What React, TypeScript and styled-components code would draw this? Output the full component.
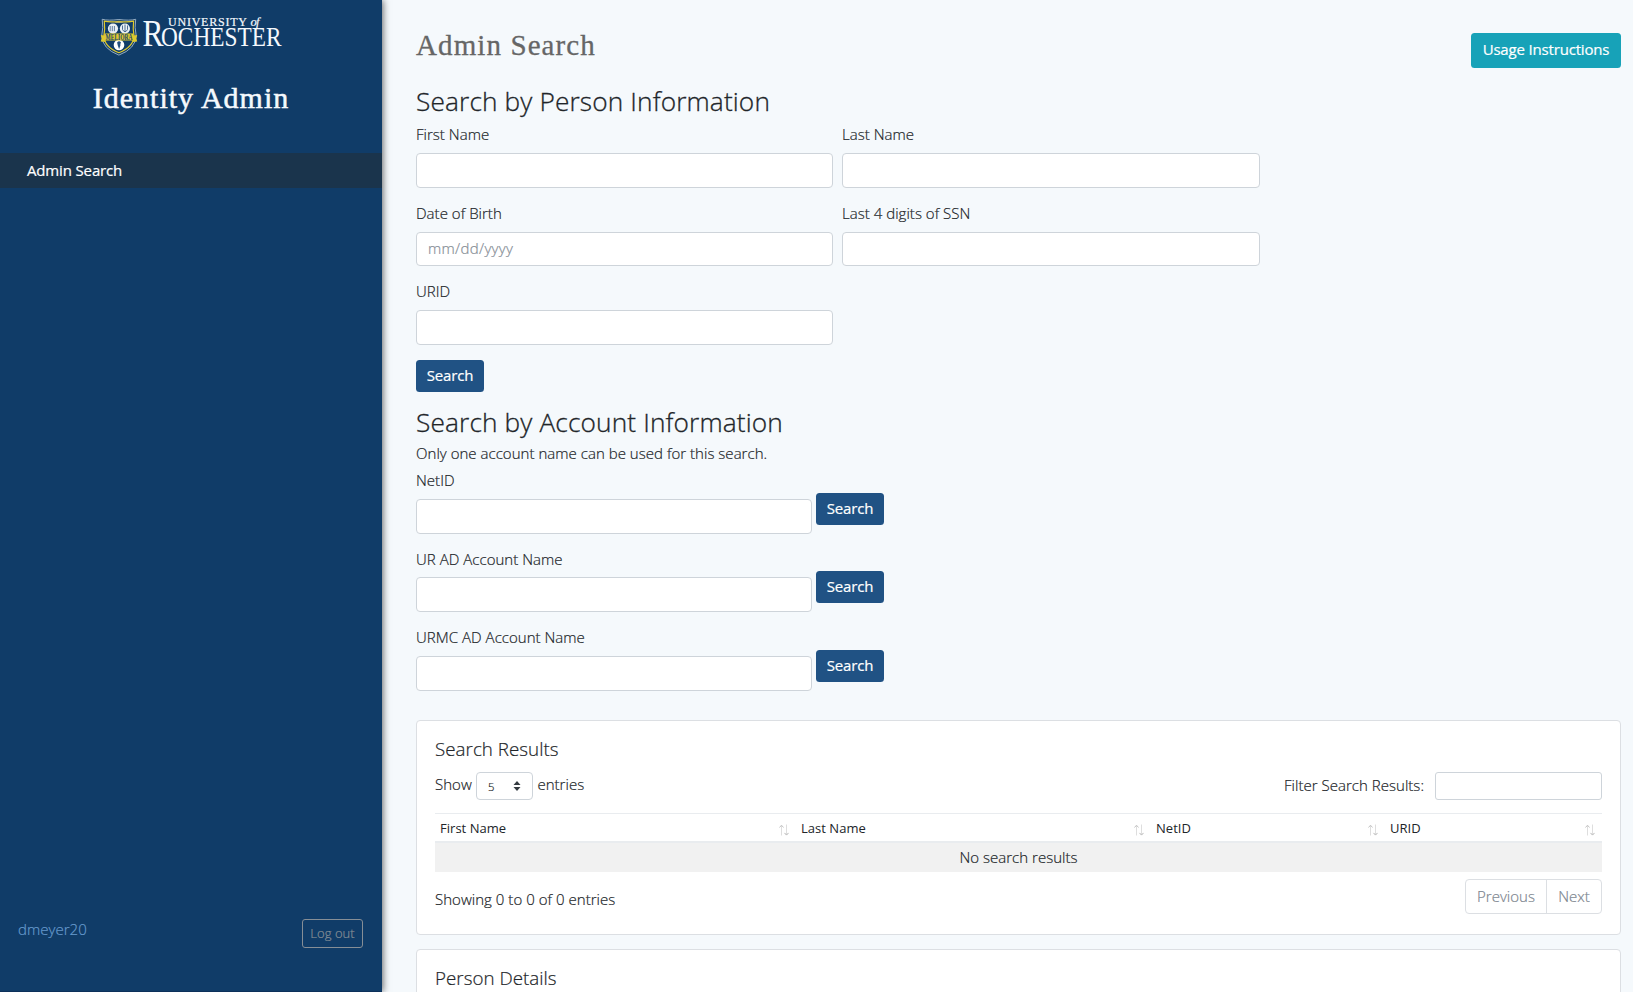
import React from 'react';
import styled, { createGlobalStyle } from 'styled-components';

const GlobalStyle = createGlobalStyle`
  *, *::before, *::after { box-sizing: border-box; }
  body {
    margin: 0;
    background: #f5f9fc;
    color: #212529;
    font: 300 15px/22.5px 'Open Sans', 'Noto Sans', sans-serif;
    letter-spacing: 0.03px;
    -webkit-text-stroke: 0.2px;
  }
  button, input { font: inherit; letter-spacing: inherit; }
`;

const Page = styled.div`
  display: flex;
  height: 992px;
  overflow: hidden;
`;

const Sidebar = styled.aside`
  display: flex;
  flex-direction: column;
  flex: none;
  width: 382px;
  background: #103c68;
  border-bottom: 1px solid #0c305a;
  box-shadow: 1px 0 7px rgba(0, 0, 0, 0.6);
`;

const Logo = styled.svg`
  display: block;
  width: 190px;
  height: 48px;
  margin: 14px 0 0 97px;
  overflow: visible;
  font-family: 'Liberation Serif', serif;
  letter-spacing: 0;
  -webkit-text-stroke: 0;
`;

const AppName = styled.h1`
  margin: 18px 0 37px;
  font: 400 30px/36px 'Liberation Serif', serif;
  letter-spacing: 1px;
  text-align: center;
  color: #f5f9fd;
  -webkit-text-stroke: 0.5px #f5f9fd;
`;

const NavItem = styled.a`
  padding-left: 27px;
  line-height: 35px;
  font-weight: 400;
  letter-spacing: -0.15px;
  color: #fff;
  background: #1a344c;
`;

const SidebarFooter = styled.div`
  display: flex;
  justify-content: space-between;
  align-items: flex-start;
  margin-top: auto;
  padding: 0 19px 43px 18px;
`;

const UserName = styled.span`
  color: #6699cc;
`;

const LogoutButton = styled.button`
  width: 61px;
  height: 29px;
  margin-top: 1px;
  padding: 0;
  border: 1px solid #868e96;
  border-radius: 3px;
  background: none;
  color: #868e96;
  font-size: 13px;
`;

const Main = styled.main`
  flex: 1;
  min-width: 0;
  padding: 0 12px 0 34px;
`;

const Header = styled.header`
  display: flex;
  justify-content: space-between;
  align-items: flex-start;
  height: 86px;
  padding-top: 26px;
`;

const PageTitle = styled.h2`
  margin: 0;
  font: 400 29px/38px 'Liberation Serif', serif;
  letter-spacing: 1.1px;
  color: #666;
  -webkit-text-stroke: 0.3px #666;
`;

const Button = styled.button<{ $info?: boolean }>`
  flex: none;
  width: ${(p) => (p.$info ? 150 : 68)}px;
  height: ${(p) => (p.$info ? 35 : 32.25)}px;
  margin-top: ${(p) => (p.$info ? 7 : 0)}px;
  padding: 0 0 ${(p) => (p.$info ? 2 : 1.4)}px;
  border: 0;
  border-radius: 3.5px;
  background: ${(p) => (p.$info ? '#17a2b8' : '#205284')};
  color: #fff;
  font-weight: 400;
  letter-spacing: -0.17px;
`;

const SectionTitle = styled.h3<{ $top?: number; $bottom: number }>`
  margin: ${(p) => p.$top ?? 0}px 0 ${(p) => p.$bottom}px;
  font-size: 26.25px;
  font-weight: 300;
  line-height: 31.5px;
  letter-spacing: 0.13px;
  -webkit-text-stroke: 0.3px;
`;

const PersonGrid = styled.div`
  display: grid;
  grid-template-columns: 417px 418px;
  grid-auto-rows: 78.5px;
  column-gap: 9px;
  margin-bottom: 1.4px;
`;

const Field = styled.label`
  display: block;
`;

const Input = styled.input`
  display: block;
  width: 100%;
  height: 34.5px;
  margin-top: 7.8px;
  padding: 0 11px 2px;
  border: 1px solid #ced4da;
  border-radius: 4px;
  background: #fff;
  &::placeholder { color: #868e96; letter-spacing: 0.3px; opacity: 1; }
`;

const Hint = styled.p`
  margin: 0 0 4.2px;
`;

const AccountRow = styled.div`
  display: grid;
  grid-template-columns: 396px auto;
  justify-content: start;
  align-items: start;
  column-gap: 4px;
  height: 78.5px;
  & ${Input} { height: 35px; margin-top: 7.4px; }
  & > ${Button} { margin-top: 23.7px; }
`;

const Card = styled.section<{ $top: number }>`
  margin-top: ${(p) => p.$top}px;
  padding: 16px 18px 20px;
  border: 1px solid #dcdfe3;
  border-radius: 4px;
  background: #fff;
`;

const CardTitle = styled.h4`
  margin: 0 0 12px;
  font-size: 18.75px;
  font-weight: 300;
  line-height: 23px;
`;

const Controls = styled.div`
  display: flex;
  justify-content: space-between;
  height: 28px;
  margin-bottom: 13px;
`;

const LengthControl = styled.div`
  display: flex;
  gap: 4.300px;
  line-height: 25px;
`;

const LengthSelect = styled.div`
  display: flex;
  justify-content: space-between;
  align-items: center;
  width: 57px;
  height: 28px;
  padding: 0 11px;
  border: 1px solid #ced4da;
  border-radius: 4px;
  font-size: 11.25px;
`;

const FilterControl = styled.label`
  display: flex;
  gap: 11px;
  line-height: 27px;
`;

const FilterInput = styled(Input)`
  width: 167px;
  height: 28px;
  margin: 0;
  border-radius: 3px;
`;

const Table = styled.div`
  border-top: 1px solid #e9ecef;
`;

const TableHead = styled.div`
  display: grid;
  grid-template-columns: 361px 355px 234px 217px;
  height: 29px;
  border-bottom: 2px solid #e9ecef;
`;

const HeadCell = styled.div`
  display: flex;
  justify-content: space-between;
  align-items: center;
  padding: 2px 7px 0 5px;
  font-size: 13px;
  font-weight: 400;
  -webkit-text-stroke: 0;
`;

const SortGlyph = styled.svg`
  width: 10px;
  height: 12px;
  margin-top: 2px;
`;

const EmptyRow = styled.div`
  background: #f1f1f1;
  text-align: center;
  line-height: 29px;
`;

const TableFooter = styled.div`
  display: flex;
  justify-content: space-between;
  height: 35px;
  margin-top: 7px;
  line-height: 41px;
`;

const Pagination = styled.div`
  display: flex;
  height: 35px;
  border: 1px solid #dcdfe3;
  border-radius: 4px;
`;

const PageLink = styled.a<{ $width: number }>`
  width: ${(p) => p.$width}px;
  line-height: 33px;
  text-align: center;
  color: #7d868f;
  & + & { border-left: 1px solid #dcdfe3; }
`;

const SortIcon = () => (
  <SortGlyph viewBox="0 0 10 12" fill="none">
    <path d="M2.5 11.5V1.5" stroke="#dedede" />
    <path d="M.5 3.5 2.5 1.2 4.5 3.5" stroke="#c4c4c4" />
    <path d="M7.5.5v10" stroke="#dedede" />
    <path d="M5.5 8.9l2 2.2 2-2.2" stroke="#b5b5b5" />
  </SortGlyph>
);

const RochesterLogo = () => (
  <Logo viewBox="97 14 190 48" role="img">
    <path d="M102.2 19.3q6 1.6 16.7.2 10.7 1.4 16.8-.2-1.4 8 .5 16.5-.7 13-17.3 19.3Q102.3 48.8 101.7 35.8q1.9-8.5.5-16.5z" fill="#103c68" stroke="#a3b8cb" strokeWidth=".9" />
    <path d="M104.3 21.2q6 1.4 14.6.2 8.6 1.2 14.7-.2-.9 7.5.4 14.5-.4 11.2-15.1 17-14.7-5.8-15-17 1.3-7 .4-14.500z" fill="none" stroke="#dfc92f" strokeWidth="1.2" />
    <path d="M115.2 22.3h7.5" stroke="#a9a766" strokeWidth="1.4" />
    <circle cx="113" cy="28.6" r="5.1" fill="#eaf0f5" />
    <path d="M110.2 26v5.2M112.3 26v5.2M114.4 26v5.2" stroke="#3c6189" strokeWidth=".8" />
    <circle cx="124.9" cy="28.6" r="5.1" fill="#eaf0f5" />
    <path d="M122.5 25.5v4q2.5 4.5 5 0v-4M125 24.5v7.5" stroke="#3c6189" strokeWidth=".9" fill="none" />
    <circle cx="119" cy="45" r="5.3" fill="#fff" />
    <path d="M117.1 42.5q2-2.6 3.9 0-1 1.6-.6 3l-1.3 3.7-1.3-3.7z" fill="#24507f" />
    <path d="M100.8 35l3.4.5v-2h29.400v2l3.6-.5-.8 3.3.8 3.3-4.6.4v-1.500h-27.200v1.500l-4.600-.4.8-3.300z" fill="#dfc92f" />
    <text x="105.5" y="39.8" fontSize="7.5" fontWeight="700" fill="#1b4670" textLength="27" lengthAdjust="spacingAndGlyphs">MELIORA</text>
    <g fill="#f5f9fd">
      <text x="168" y="25.7" fontSize="12" textLength="79" stroke="#f5f9fd" strokeWidth=".2">UNIVERSITY</text>
      <text x="250.5" y="25.7" fontSize="12.5" fontStyle="italic" textLength="9" stroke="#f5f9fd" strokeWidth=".2">of</text>
      <text x="142.5" y="46" fontSize="37" textLength="21" lengthAdjust="spacingAndGlyphs">R</text>
      <text x="161" y="46" fontSize="27" textLength="120.5" lengthAdjust="spacingAndGlyphs">OCHESTER</text>
    </g>
  </Logo>
);

const personFields = [
  { label: 'First Name' },
  { label: 'Last Name' },
  { label: 'Date of Birth', placeholder: 'mm/dd/yyyy' },
  { label: 'Last 4 digits of SSN' },
  { label: 'URID' },
];
const accountFields = ['NetID', 'UR AD Account Name', 'URMC AD Account Name'];
const columns = ['First Name', 'Last Name', 'NetID', 'URID'];

export default function App() {
  return (
    <>
      <GlobalStyle />
      <Page>
        <Sidebar>
          <RochesterLogo />
          <AppName>Identity Admin</AppName>
          <NavItem>Admin Search</NavItem>
          <SidebarFooter>
            <UserName>dmeyer20</UserName>
            <LogoutButton>Log out</LogoutButton>
          </SidebarFooter>
        </Sidebar>
        <Main>
          <Header>
            <PageTitle>Admin Search</PageTitle>
            <Button $info>Usage Instructions</Button>
          </Header>
          <SectionTitle $bottom={5.6}>Search by Person Information</SectionTitle>
          <PersonGrid>
            {personFields.map((f) => (
              <Field key={f.label}>
                {f.label}
                <Input placeholder={f.placeholder} />
              </Field>
            ))}
          </PersonGrid>
          <Button>Search</Button>
          <SectionTitle $top={14.5} $bottom={4.1}>Search by Account Information</SectionTitle>
          <Hint>Only one account name can be used for this search.</Hint>
          {accountFields.map((label) => (
            <AccountRow key={label}>
              <Field>
                {label}
                <Input />
              </Field>
              <Button>Search</Button>
            </AccountRow>
          ))}
          <Card $top={15.5}>
            <CardTitle>Search Results</CardTitle>
            <Controls>
              <LengthControl>
                Show
                <LengthSelect>
                  5
                  <svg width="8" height="10" viewBox="0 0 8 10" fill="#343a40">
                    <path d="M4 0l3.5 4h-7zM4 10l3.5-4h-7z" />
                  </svg>
                </LengthSelect>
                entries
              </LengthControl>
              <FilterControl>
                Filter Search Results:
                <FilterInput />
              </FilterControl>
            </Controls>
            <Table>
              <TableHead>
                {columns.map((c) => (
                  <HeadCell key={c}>
                    {c}
                    <SortIcon />
                  </HeadCell>
                ))}
              </TableHead>
              <EmptyRow>No search results</EmptyRow>
            </Table>
            <TableFooter>
              Showing 0 to 0 of 0 entries
              <Pagination>
                <PageLink $width={80}>Previous</PageLink>
                <PageLink $width={55}>Next</PageLink>
              </Pagination>
            </TableFooter>
          </Card>
          <Card $top={14.4}>
            <CardTitle>Person Details</CardTitle>
          </Card>
        </Main>
      </Page>
    </>
  );
}
